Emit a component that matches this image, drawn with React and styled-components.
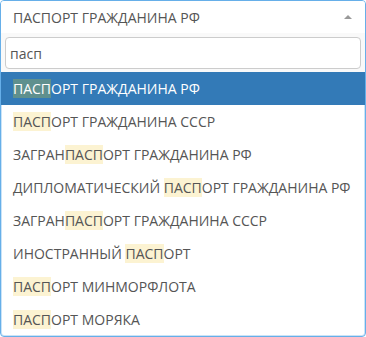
import React from 'react';
import styled, { createGlobalStyle } from 'styled-components';

const GlobalStyle = createGlobalStyle`
    html, body {
        margin: 0;
        padding: 0;
        background: #fff;
    }
    body {
        font-family: "Open Sans", "Noto Sans", sans-serif;
    }
`;

const options = [
    'ПАСПОРТ ГРАЖДАНИНА РФ',
    'ПАСПОРТ ГРАЖДАНИНА СССР',
    'ЗАГРАНПАСПОРТ ГРАЖДАНИНА РФ',
    'ДИПЛОМАТИЧЕСКИЙ ПАСПОРТ ГРАЖДАНИНА РФ',
    'ЗАГРАНПАСПОРТ ГРАЖДАНИНА СССР',
    'ИНОСТРАННЫЙ ПАСПОРТ',
    'ПАСПОРТ МИНМОРФЛОТА',
    'ПАСПОРТ МОРЯКА'
];

const query = 'пасп';

function Highlighted({ text, active }) {
    const idx = text.toLowerCase().indexOf(query);
    if (idx < 0) return <span>{text}</span>;
    return (
        <span>
            {text.slice(0, idx)}
            <Mark $active={active}>{text.slice(idx, idx + query.length)}</Mark>
            {text.slice(idx + query.length)}
        </span>
    );
}

export default function App() {
    return (
        <>
            <GlobalStyle />
            <Select>
                <Selection>
                    <span>ПАСПОРТ ГРАЖДАНИНА РФ</span>
                    <Arrow />
                </Selection>
                <SearchBox>
                    <SearchInput defaultValue="пасп" autoFocus />
                </SearchBox>
                <Results>
                    {options.map((o, i) => (
                        <Option key={o} $active={i === 0}>
                            <Highlighted text={o} active={i === 0} />
                        </Option>
                    ))}
                </Results>
            </Select>
        </>
    );
}

const Select = styled.div`
    width: 366px;
    height: 337px;
    box-sizing: border-box;
    border: 1px solid #66afe9;
    border-radius: 4px;
    box-shadow: inset 0 0 0 1px rgba(102, 175, 233, 0.35);
    overflow: hidden;
    display: flex;
    flex-direction: column;
    background: #fff;
    color: #555;
    font-size: 14px;
`;

const Selection = styled.div`
    height: 32px;
    flex: none;
    display: flex;
    align-items: center;
    justify-content: space-between;
    padding: 0 12px 0 12px;
    background: #fff;
`;

const Arrow = styled.span`
    width: 0;
    height: 0;
    border-left: 4px solid transparent;
    border-right: 4px solid transparent;
    border-bottom: 4px solid #999;
    margin-right: 1px;
`;

const SearchBox = styled.div`
    flex: none;
    padding: 4px 4px 3px 4px;
    background: #f9f9f9;
`;

const SearchInput = styled.input`
    width: 100%;
    height: 32px;
    box-sizing: border-box;
    border: 1px solid #ccc;
    border-radius: 4px;
    padding: 0 4px;
    font-family: inherit;
    font-size: 14px;
    color: #555;
    outline: none;
    background: #fff;
    caret-color: #333;
`;

const Results = styled.div`
    display: flex;
    flex-direction: column;
`;

const Option = styled.div`
    height: 33px;
    display: flex;
    align-items: center;
    padding: 0 12px;
    line-height: 20px;
    white-space: pre;
    background: ${p => (p.$active ? '#337ab7' : 'transparent')};
    color: ${p => (p.$active ? '#fff' : '#555')};
`;

const Mark = styled.span`
    background: ${p => (p.$active ? '#5f908e' : '#fcf3d2')};
    color: inherit;
`;
